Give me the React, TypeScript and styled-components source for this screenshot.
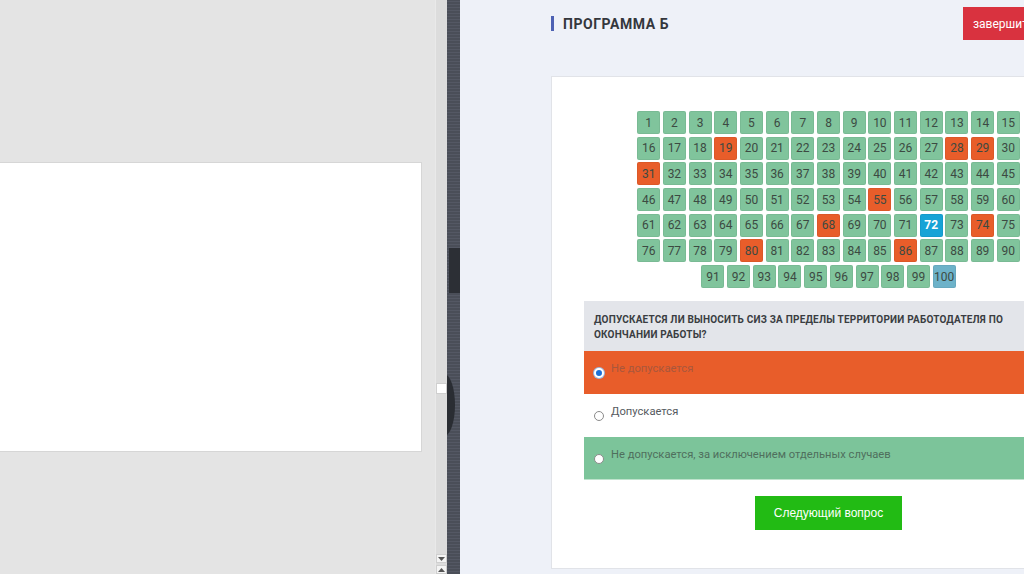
import React from "react";
import styled, { createGlobalStyle } from "styled-components";

const Global = createGlobalStyle`
  html, body { margin: 0; padding: 0; width: 1024px; height: 574px; overflow: hidden; }
  body { font-family: Roboto, "Noto Sans", Arial, sans-serif; }
  * { box-sizing: border-box; }
`;

const Page = styled.div`
  display: flex;
  width: 1024px;
  height: 574px;
  overflow: hidden;
`;

const LeftPane = styled.div`
  width: 435px;
  flex: none;
  background: #e4e4e4;
  padding-top: 162px;
`;

const Slide = styled.div`
  width: 422px;
  height: 290px;
  background: #ffffff;
  border: 1px solid #d6d6d6;
  border-left: none;
`;

const ScrollTrack = styled.div`
  width: 12px;
  flex: none;
  background: #dcdcdc;
  border-left: 1px solid #e9e9e9;
  display: flex;
  flex-direction: column;
  align-items: center;
  padding-top: 383px;
`;

const Thumb = styled.div`
  width: 11px;
  height: 13px;
  background: #fff;
  border: 1px solid #cfcfcf;
`;

const ArrowBtn = styled.div<{ $mt: number }>`
  width: 11px;
  height: 10px;
  background: #f4f4f4;
  border: 1px solid #cfcfcf;
  display: flex;
  align-items: center;
  justify-content: center;
  margin-top: ${(p) => p.$mt}px;
`;

const DarkStrip = styled.div`
  width: 13px;
  flex: none;
  position: relative;
  background: repeating-linear-gradient(0deg, #4a4e58 0 2px, #545864 2px 3px);
  &::before {
    content: "";
    position: absolute;
    left: 2px;
    top: 248px;
    width: 11px;
    height: 45px;
    background: #2c2f35;
  }
  &::after {
    content: "";
    position: absolute;
    left: -14px;
    top: 374px;
    width: 22px;
    height: 62px;
    border-radius: 50%;
    background: #2a2d33;
    clip-path: inset(0 0 0 14px);
  }
`;

const RightPane = styled.div`
  flex: 1;
  background: #eef1f8;
  padding-left: 91px;
  overflow: hidden;
`;

const Column = styled.div`
  width: 555px;
`;

const TitleRow = styled.div`
  display: flex;
  align-items: center;
  height: 33px;
  margin-top: 7px;
`;

const Title = styled.h1`
  margin: 0;
  display: flex;
  align-items: center;
  gap: 9px;
  font-size: 14px;
  font-weight: 700;
  color: #34373d;
  letter-spacing: 0.55px;
  &::before {
    content: "";
    width: 3px;
    height: 15px;
    background: #4d61b3;
  }
`;

const FinishButton = styled.button`
  margin-left: auto;
  width: 143px;
  height: 33px;
  border: none;
  background: #d9323f;
  color: #fff;
  font-family: inherit;
  font-size: 12px;
  text-align: left;
  padding: 0 0 0 10px;
  white-space: nowrap;
  overflow: hidden;
`;

const Card = styled.div`
  margin-top: 36px;
  background: #fff;
  border: 1px solid #e1e3e8;
  padding: 34px 32px 38px;
  display: flex;
  flex-direction: column;
  align-items: center;
`;

const Grid = styled.div`
  width: 384px;
  display: flex;
  flex-wrap: wrap;
  justify-content: center;
  gap: 2.7px 2.7px;
`;

type CellKind = "ok" | "bad" | "cur" | "todo";

const cellBg: Record<CellKind, string> = {
  ok: "#80c49c",
  bad: "#e85d2a",
  cur: "#17a3d6",
  todo: "#6db2c9",
};

const Cell = styled.div<{ $kind: CellKind }>`
  width: 23px;
  height: 23px;
  border-radius: 2px;
  background: ${(p) => cellBg[p.$kind]};
  box-shadow: inset 0 0 0 1px rgba(0, 0, 0, 0.05);
  display: flex;
  align-items: center;
  justify-content: center;
  font-size: 12px;
  color: ${(p) => (p.$kind === "cur" ? "#ffffff" : "#3c4a42")};
  font-weight: ${(p) => (p.$kind === "cur" ? 700 : 400)};
`;

const Question = styled.div`
  margin-top: 13px;
  align-self: stretch;
  background: #e3e5ea;
  padding: 11px 60px 9px 10px;
  font-size: 10px;
  font-weight: 700;
  line-height: 15px;
  color: #3a3d42;
  text-transform: uppercase;
  letter-spacing: 0.2px;
`;

type OptKind = "wrong" | "plain" | "right";

const optBg: Record<OptKind, string> = {
  wrong: "#e85d2a",
  plain: "#ffffff",
  right: "#7cc49a",
};
const optColor: Record<OptKind, string> = {
  wrong: "#a8573c",
  plain: "#555a60",
  right: "#4f6f5d",
};

const Option = styled.label<{ $kind: OptKind }>`
  align-self: stretch;
  height: 43px;
  display: flex;
  align-items: flex-start;
  gap: 7px;
  padding: 11px 0 0 10px;
  background: ${(p) => optBg[p.$kind]};
  color: ${(p) => optColor[p.$kind]};
  font-size: 11.2px;
  border-bottom: ${(p) => (p.$kind === "right" ? "1px solid #bfe3cd" : "none")};
`;

const Radio = styled.span<{ $checked?: boolean }>`
  width: 10px;
  height: 10px;
  margin-top: 6px;
  border-radius: 50%;
  flex: none;
  background: ${(p) => (p.$checked ? "#1b6fd6" : "#ffffff")};
  border: ${(p) => (p.$checked ? "2px solid #ffffff" : "1px solid #8a8a8a")};
  box-shadow: ${(p) => (p.$checked ? "0 0 0 1px #9bb8e0" : "none")};
`;

const NextButton = styled.button`
  margin-top: 16px;
  width: 147px;
  height: 34px;
  border: none;
  background: #22bb14;
  color: #fff;
  font-family: "Liberation Sans", Arial, sans-serif;
  font-size: 12px;
`;

const wrong = new Set([19, 28, 29, 31, 55, 68, 74, 80, 86]);

function kindOf(n: number): CellKind {
  if (n === 72) return "cur";
  if (n === 100) return "todo";
  if (wrong.has(n)) return "bad";
  return "ok";
}

export default function App() {
  const nums = Array.from({ length: 100 }, (_, i) => i + 1);
  return (
    <>
      <Global />
      <Page>
        <LeftPane>
          <Slide />
        </LeftPane>
        <ScrollTrack>
          <Thumb />
          <ArrowBtn $mt={160}>
            <svg width="7" height="4" viewBox="0 0 7 4">
              <path d="M0 0h7L3.5 4z" fill="#555" />
            </svg>
          </ArrowBtn>
          <ArrowBtn $mt={2}>
            <svg width="7" height="4" viewBox="0 0 7 4">
              <path d="M0 4h7L3.5 0z" fill="#555" />
            </svg>
          </ArrowBtn>
        </ScrollTrack>
        <DarkStrip />
        <RightPane>
          <Column>
            <TitleRow>
              <Title>ПРОГРАММА Б</Title>
              <FinishButton>завершить тестирование</FinishButton>
            </TitleRow>
            <Card>
              <Grid>
                {nums.map((n) => (
                  <Cell key={n} $kind={kindOf(n)}>
                    {n}
                  </Cell>
                ))}
              </Grid>
              <Question>
                Допускается ли выносить СИЗ за пределы территории работодателя по окончании работы?
              </Question>
              <Option $kind="wrong">
                <Radio $checked />
                Не допускается
              </Option>
              <Option $kind="plain">
                <Radio />
                Допускается
              </Option>
              <Option $kind="right">
                <Radio />
                Не допускается, за исключением отдельных случаев
              </Option>
              <NextButton>Следующий вопрос</NextButton>
            </Card>
          </Column>
        </RightPane>
      </Page>
    </>
  );
}
